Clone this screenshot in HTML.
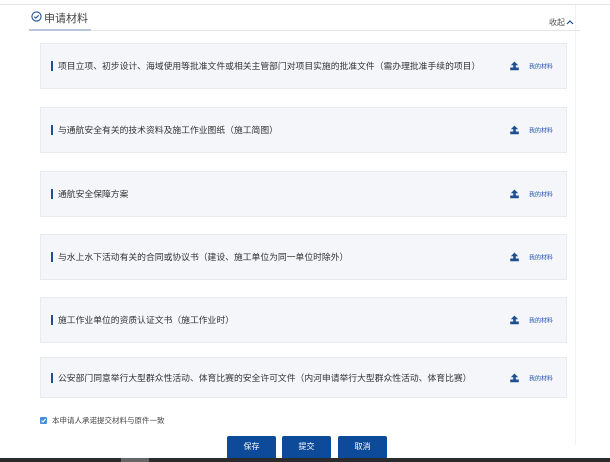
<!DOCTYPE html>
<html><head><meta charset="utf-8"><style>
body{margin:0;width:610px;height:462px;background:#fff;position:relative;overflow:hidden;font-family:"Liberation Sans","Noto Sans CJK SC",sans-serif;color:#333}
.a{position:absolute}
.card{position:absolute;left:40px;width:527px;background:#f5f6f9;border:1px solid #e9eaee;box-sizing:border-box}
.card .t{position:absolute;left:10px;top:50%;transform:translateY(-50%);font-size:8.8px;color:#333;white-space:nowrap;padding-left:5px;border-left:2px solid #1d4f91;line-height:10px}
.card .up{position:absolute;left:469px;top:50%;transform:translateY(-50%)}
.card .lk{position:absolute;left:488px;top:50%;transform:translateY(-50%);font-size:6px;color:#1d4fbf;white-space:nowrap}
.btn{position:absolute;top:436px;height:23px;width:49px;background:#0d4b9a;color:#fff;font-size:8px;text-align:center;line-height:22px;border-radius:2px 2px 0 0}
</style></head><body>
<div class="a" style="left:0;top:4px;width:610px;height:1px;background:#e3e3e3"></div>
<div class="a" style="left:575px;top:5px;width:1px;height:440px;background:#f2f2f2"></div>
<svg class="a" style="left:31px;top:11px" width="11" height="11" viewBox="0 0 11 11"><circle cx="5.5" cy="5.5" r="4.6" fill="none" stroke="#1d4f91" stroke-width="1.1"/><path d="M3.3 5.6 L4.9 7.1 L7.7 4.2" fill="none" stroke="#1d4f91" stroke-width="1.1"/></svg>
<div class="a" style="left:44px;top:10px;font-size:11px;color:#444">申请材料</div>
<div class="a" style="left:29px;top:30px;width:551px;height:1px;background:#e6e6e6"></div>
<div class="a" style="left:29px;top:29px;width:62px;height:2px;background:#b7c6dc"></div>
<div class="a" style="left:549px;top:17px;font-size:8px;color:#555">收起</div>
<svg class="a" style="left:566px;top:19px" width="8" height="6" viewBox="0 0 8 6"><path d="M1 5 L4 2 L7 5" fill="none" stroke="#1d4f91" stroke-width="1.2"/></svg>

<div class="card" style="top:43px;height:46px"><span class="t">项目立项、初步设计、海域使用等批准文件或相关主管部门对项目实施的批准文件（需办理批准手续的项目）</span><svg class="up" width="9" height="9" viewBox="0 0 9 9"><path d="M4.5 0.5 L1.5 3.5 H3.5 V6 H5.5 V3.5 H7.5 Z M0.5 6 V8.5 H8.5 V6" fill="#1d4f91" stroke="#1d4f91" stroke-width="0.6"/></svg><span class="lk">我的材料</span></div>
<div class="card" style="top:107px;height:46px"><span class="t">与通航安全有关的技术资料及施工作业图纸（施工简图）</span><svg class="up" width="9" height="9" viewBox="0 0 9 9"><path d="M4.5 0.5 L1.5 3.5 H3.5 V6 H5.5 V3.5 H7.5 Z M0.5 6 V8.5 H8.5 V6" fill="#1d4f91" stroke="#1d4f91" stroke-width="0.6"/></svg><span class="lk">我的材料</span></div>
<div class="card" style="top:171px;height:46px"><span class="t">通航安全保障方案</span><svg class="up" width="9" height="9" viewBox="0 0 9 9"><path d="M4.5 0.5 L1.5 3.5 H3.5 V6 H5.5 V3.5 H7.5 Z M0.5 6 V8.5 H8.5 V6" fill="#1d4f91" stroke="#1d4f91" stroke-width="0.6"/></svg><span class="lk">我的材料</span></div>
<div class="card" style="top:234px;height:46px"><span class="t">与水上水下活动有关的合同或协议书（建设、施工单位为同一单位时除外）</span><svg class="up" width="9" height="9" viewBox="0 0 9 9"><path d="M4.5 0.5 L1.5 3.5 H3.5 V6 H5.5 V3.5 H7.5 Z M0.5 6 V8.5 H8.5 V6" fill="#1d4f91" stroke="#1d4f91" stroke-width="0.6"/></svg><span class="lk">我的材料</span></div>
<div class="card" style="top:297px;height:46px"><span class="t">施工作业单位的资质认证文书（施工作业时）</span><svg class="up" width="9" height="9" viewBox="0 0 9 9"><path d="M4.5 0.5 L1.5 3.5 H3.5 V6 H5.5 V3.5 H7.5 Z M0.5 6 V8.5 H8.5 V6" fill="#1d4f91" stroke="#1d4f91" stroke-width="0.6"/></svg><span class="lk">我的材料</span></div>
<div class="card" style="top:357px;height:41px"><span class="t">公安部门同意举行大型群众性活动、体育比赛的安全许可文件（内河申请举行大型群众性活动、体育比赛）</span><svg class="up" width="9" height="9" viewBox="0 0 9 9"><path d="M4.5 0.5 L1.5 3.5 H3.5 V6 H5.5 V3.5 H7.5 Z M0.5 6 V8.5 H8.5 V6" fill="#1d4f91" stroke="#1d4f91" stroke-width="0.6"/></svg><span class="lk">我的材料</span></div>

<div class="a" style="left:40px;top:417px;width:7px;height:7px;background:#4a90d9;border-radius:1px"></div>
<svg class="a" style="left:40px;top:417px" width="7" height="7" viewBox="0 0 7 7"><path d="M1.5 3.6 L3 5 L5.6 2" fill="none" stroke="#fff" stroke-width="1"/></svg>
<div class="a" style="left:52px;top:415px;font-size:7.5px;color:#444">本申请人承诺提交材料与原件一致</div>

<div class="btn" style="left:227px">保存</div>
<div class="btn" style="left:282px">提交</div>
<div class="btn" style="left:338px">取消</div>
<div class="a" style="left:0;top:458px;width:610px;height:4px;background:#2b2b2b"></div>
<div class="a" style="left:121px;top:458px;width:28px;height:4px;background:#666"></div>
</body></html>
